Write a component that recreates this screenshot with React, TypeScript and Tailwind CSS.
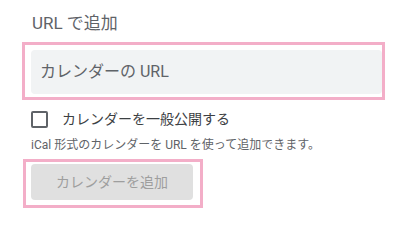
export default function App() {
  return (
    <div className="w-[399px] h-[239px] bg-white pt-[13px] font-['Roboto','Noto_Sans_CJK_JP',sans-serif]">
      {/* section title */}
      <div className="pl-[32px] text-[17px] leading-[20px] text-[#5f6368]">URL で追加</div>

      {/* url field (highlighted) */}
      <div className="mt-[9px] ml-[22px] w-[363px] border-[3px] border-[#f3aec8] pl-[6px] pt-[5px] pb-[3px]">
        <div className="h-[44px] rounded-[4px] bg-[#f1f3f4] flex items-center pl-[9px] text-[16px] text-[#5f6368]">
          カレンダーの URL
        </div>
      </div>

      {/* public checkbox */}
      <label className="mt-[11px] ml-[31px] flex items-center gap-[14px]">
        <span className="w-[17px] h-[17px] rounded-[2px] border-2 border-[#5f6368] box-border" />
        <span className="text-[14px] leading-[17px] text-[#3c4043]">カレンダーを一般公開する</span>
      </label>

      <p className="mt-[9px] ml-[31px] text-[12px] leading-[16px] text-[#5f6368]">
        iCal 形式のカレンダーを URL を使って追加できます。
      </p>

      {/* add button (highlighted) */}
      <div className="mt-[6px] ml-[23px] w-[180px] border-[3px] border-[#f3aec8] pl-[5px] pt-[2px] pr-[7px] pb-[5px]">
        <button
          type="button"
          disabled
          className="w-[162px] h-[36px] rounded-[4px] bg-[#e0e0e0] text-[14px] text-[#9e9e9e]"
        >
          カレンダーを追加
        </button>
      </div>
    </div>
  );
}
